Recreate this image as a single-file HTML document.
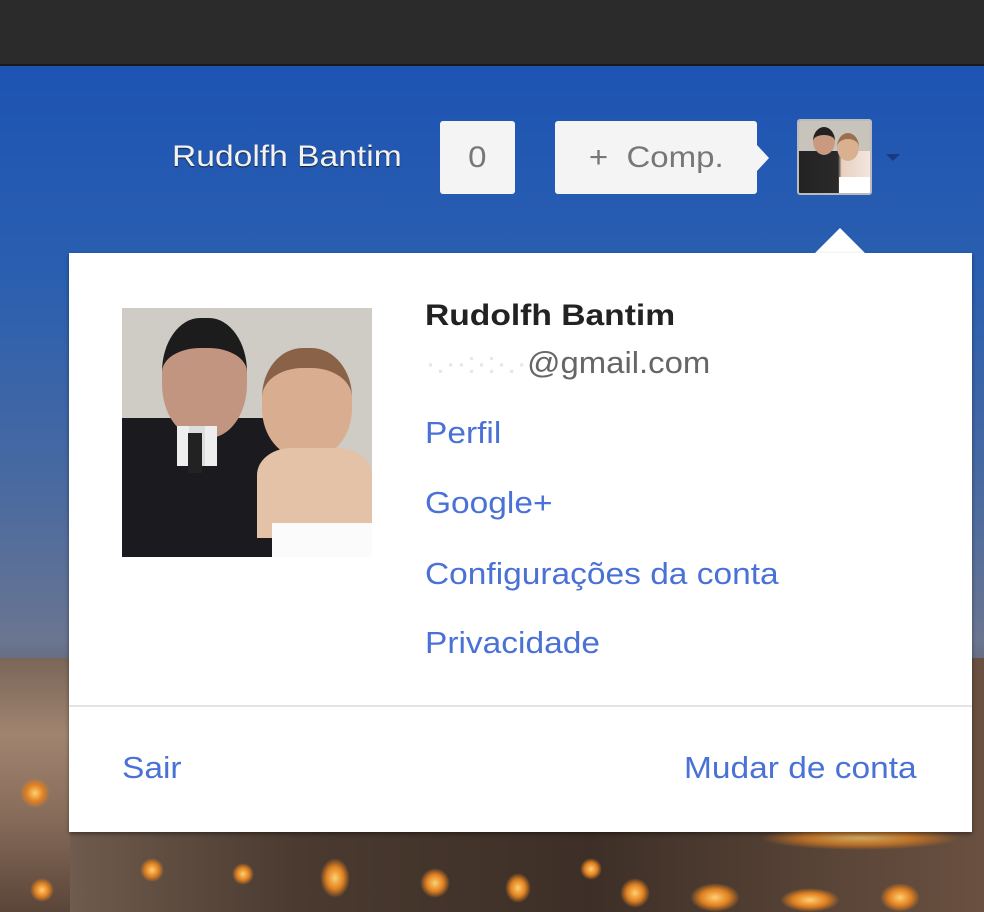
<!DOCTYPE html>
<html style="overflow:hidden;width:984px;height:912px"><head><meta charset="utf-8"><style>
*{margin:0;padding:0;box-sizing:border-box}
html,body{overflow:hidden}
body{width:984px;height:912px;position:relative;font-family:"Liberation Sans",Arial,sans-serif;background:#2c2c2c}
.bg{position:absolute;left:0;top:66px;width:984px;height:846px;background:linear-gradient(180deg,#1d54b3 0%,#2a5fb0 25%,#4a6aa0 50%,#6a7590 68%,#5a4a48 80%,#3a2c25 100%)}
.city{position:absolute;left:0;top:658px;width:984px;height:254px;overflow:hidden;background:linear-gradient(90deg,#8a7262 0%,#6e5a4c 8%,#4a3a30 30%,#3d2f27 60%,#5a4538 85%,#6a5040 100%)}
.light{position:absolute;border-radius:50%;background:radial-gradient(#ffd070,#e08020 40%,transparent 70%)}
.top{position:absolute;left:0;top:0;width:984px;height:66px;background:#2b2b2b;border-bottom:2px solid #1a1a1a}
.hname{position:absolute;left:172px;top:140px;color:#f2f2f2;font-size:30px;text-shadow:0 1px 1px #123;transform:scaleX(1.12);transform-origin:left}
.btn{position:absolute;background:#f4f4f4;border-radius:3px;color:#777;font-size:30px;text-align:center;line-height:73px;top:121px;height:73px}
.btn span{display:inline-block;transform:scaleX(1.1)}
.panel{position:absolute;left:69px;top:253px;width:903px;height:579px;background:#fff;box-shadow:0 2px 4px rgba(0,0,0,.4);overflow:hidden}
.arrow{position:absolute;left:814px;top:228px;width:0;height:0;border-left:26px solid transparent;border-right:26px solid transparent;border-bottom:26px solid #fff}
.link{position:absolute;color:#4a72d6;font-size:31px;transform:scaleX(1.08);transform-origin:left;white-space:nowrap}
</style></head><body>
<div class="top"></div>
<div class="bg"></div>
<div class="city">
<div style="position:absolute;left:0;top:0;width:70px;height:254px;background:linear-gradient(180deg,#7a6658,#a08470 30%,#8a6e5c 60%,#5a4538)"></div>
<div class="light" style="left:20px;top:120px;width:30px;height:30px"></div>
<div class="light" style="left:30px;top:220px;width:24px;height:24px"></div>
<div class="light" style="left:140px;top:200px;width:24px;height:24px"></div>
<div class="light" style="left:232px;top:205px;width:22px;height:22px"></div>
<div class="light" style="left:320px;top:200px;width:30px;height:40px"></div>
<div class="light" style="left:420px;top:210px;width:30px;height:30px"></div>
<div class="light" style="left:505px;top:215px;width:26px;height:30px"></div>
<div class="light" style="left:580px;top:200px;width:22px;height:22px"></div>
<div class="light" style="left:620px;top:220px;width:30px;height:30px"></div>
<div class="light" style="left:690px;top:225px;width:50px;height:29px"></div>
<div class="light" style="left:780px;top:230px;width:60px;height:24px"></div>
<div class="light" style="left:880px;top:225px;width:40px;height:29px"></div>
<div class="light" style="left:760px;top:168px;width:200px;height:24px;border-radius:10px;opacity:.7"></div>
</div>
<div class="hname">Rudolfh Bantim</div>
<div class="btn" style="left:440px;width:75px"><span>0</span></div>
<div class="btn" style="left:555px;width:202px"><span>+&nbsp; Comp.</span></div>
<div style="position:absolute;left:757px;top:145px;border-top:13px solid transparent;border-bottom:13px solid transparent;border-left:12px solid #f4f4f4"></div>
<div style="position:absolute;left:797px;top:119px;width:75px;height:76px;border:2px solid #bbb;border-radius:3px;background:linear-gradient(90deg,#222 0%,#2a2a2a 55%,#e8d0c0 60%,#f2e6de 100%);overflow:hidden">
<div style="position:absolute;left:0;top:0;width:71px;height:30px;background:#c8c4bc"></div>
<div style="position:absolute;left:14px;top:6px;width:22px;height:28px;border-radius:50%;background:#c99a80;border-top:8px solid #222"></div>
<div style="position:absolute;left:38px;top:12px;width:22px;height:28px;border-radius:50%;background:#d9b090;border-top:6px solid #9a7050"></div>
<div style="position:absolute;left:40px;top:56px;width:31px;height:16px;background:#fff"></div>
</div>
<div style="position:absolute;left:886px;top:154px;border-left:7px solid transparent;border-right:7px solid transparent;border-top:7px solid #1a3a80"></div>
<div class="arrow"></div>
<div class="panel">
<div style="position:absolute;left:53px;top:55px;width:250px;height:249px;background:#cfcbc5;overflow:hidden">
<div style="position:absolute;left:0;top:110px;width:160px;height:139px;background:#1a1a1f"></div>
<div style="position:absolute;left:40px;top:10px;width:85px;height:120px;border-radius:45%;background:#c29580;border-top:30px solid #1c1c1c"></div>
<div style="position:absolute;left:55px;top:118px;width:40px;height:40px;background:#ddd;border-left:12px solid #eee;border-right:12px solid #eee"></div>
<div style="position:absolute;left:66px;top:125px;width:14px;height:40px;background:#222"></div>
<div style="position:absolute;left:140px;top:40px;width:90px;height:110px;border-radius:45%;background:#d9ad90;border-top:20px solid #8a6248"></div>
<div style="position:absolute;left:135px;top:140px;width:115px;height:90px;background:#e4c2a8;border-radius:30% 30% 0 0"></div>
<div style="position:absolute;left:150px;top:215px;width:100px;height:34px;background:#fbfbfb"></div>
</div>
<div style="position:absolute;left:356px;top:46px;font-size:30px;font-weight:bold;color:#222;transform:scaleX(1.12);transform-origin:left;white-space:nowrap">Rudolfh Bantim</div>
<div style="position:absolute;left:356px;top:92px;font-size:31px;color:#666;transform:scaleX(1.06);transform-origin:left;white-space:nowrap"><span style="color:#e4e8ee">·.··:·:·.·</span>@gmail.com</div>
<div class="link" style="left:356px;top:162px">Perfil</div>
<div class="link" style="left:356px;top:232px">Google+</div>
<div class="link" style="left:356px;top:303px">Configurações da conta</div>
<div class="link" style="left:356px;top:372px">Privacidade</div>
<div style="position:absolute;left:0;top:452px;width:903px;height:2px;background:#e4e4e4"></div>
<div class="link" style="left:53px;top:497px">Sair</div>
<div class="link" style="left:615px;top:497px">Mudar de conta</div>
</div>
</body></html>
